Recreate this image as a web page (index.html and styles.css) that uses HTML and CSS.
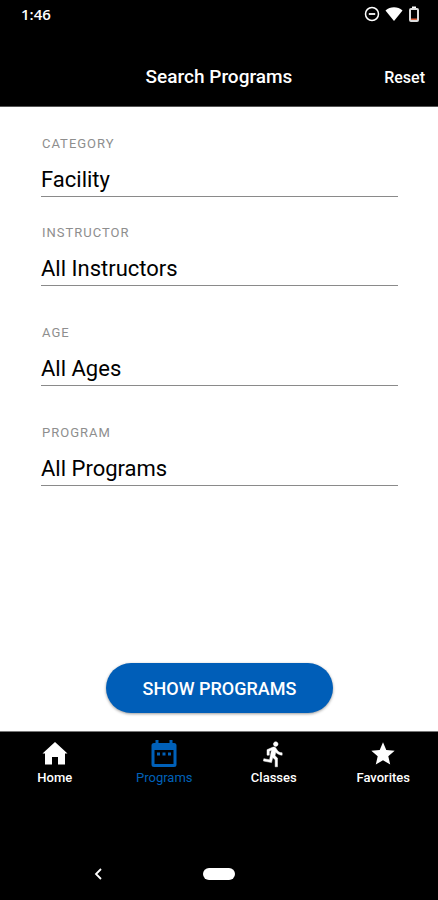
FILE: index.html
```html
<!DOCTYPE html>
<html lang="en">
<head>
    <meta charset="UTF-8">
    <meta name="viewport" content="width=device-width, initial-scale=1.0">
    <title>Search Programs</title>
    <link rel="stylesheet" href="styles.css">
</head>
<body>
<div class="status-bar">
    <span class="time">1:46</span>
    <div class="status-icons">
        <svg width="16" height="16" viewBox="0 0 16 16" fill="none" stroke="#fff">
            <circle cx="8" cy="8" r="6.5" stroke-width="1.5"/>
            <path d="M4.8 8h6.4" stroke-width="1.8"/>
        </svg>
        <svg width="18" height="16" viewBox="0 0 18 16" fill="#fff">
            <path d="M9 15L0.5 4.4C3 2.3 5.8 1.2 9 1.2s6 1.1 8.5 3.2z"/>
        </svg>
        <svg width="12" height="16" viewBox="0 0 12 16" fill="none">
            <path d="M4 0.500h4V3H4z" fill="#fff"/>
            <rect x="2" y="3" width="8" height="12" rx="1" stroke="#ddd" stroke-width="2"/>
            <path d="M3 12.500h6V14H3z" fill="#e0603c"/>
        </svg>
    </div>
</div>

<header class="header">
    <h1 class="title">Search Programs</h1>
    <button class="reset-btn" type="button">Reset</button>
</header>

<main class="content">
    <form class="search-form">
        <div class="field">
            <label for="category">CATEGORY</label>
            <select id="category"><option>Facility</option></select>
        </div>
        <div class="field field-wide">
            <label for="instructor">INSTRUCTOR</label>
            <select id="instructor"><option>All Instructors</option></select>
        </div>
        <div class="field field-wide">
            <label for="age">AGE</label>
            <select id="age"><option>All Ages</option></select>
        </div>
        <div class="field">
            <label for="program">PROGRAM</label>
            <select id="program"><option>All Programs</option></select>
        </div>
        <button class="show-btn" type="submit">SHOW PROGRAMS</button>
    </form>
</main>

<nav class="tab-bar">
    <a class="tab" href="#home">
        <svg width="28" height="28" viewBox="0 0 28 28" fill="currentColor">
            <path d="M14 2L1.500 13.500H4V24.500h7V17h6v7.500h7v-11h2.500z"/>
        </svg>
        <span>Home</span>
    </a>
    <a class="tab active" href="#programs">
        <svg width="28" height="28" viewBox="0 0 28 28" fill="currentColor">
            <path fill-rule="evenodd" d="M5.500 0h3v3h11V0h3v3H24a2.500 2.500 0 0 1 2.500 2.500v19A2.500 2.500 0 0 1 24 27H4a2.500 2.500 0 0 1-2.500-2.500v-19A2.500 2.500 0 0 1 4 3h1.500zM4.500 10v14h19V10z"/>
            <path d="M7 12.500h3v3H7zM12.500 12.500h3v3h-3zM18 12.500h3v3h-3z"/>
        </svg>
        <span>Programs</span>
    </a>
    <a class="tab" href="#classes">
        <svg width="28" height="28" viewBox="0 0 24 24" fill="currentColor" stroke="currentColor" stroke-width="0.4">
            <path d="M13.490 5.480c1.100 0 2-.9 2-2s-.9-2-2-2-2 .9-2 2 .9 2 2 2zm-3.600 13.900l1-4.400 2.100 2v6h2v-7.500l-2.100-2 .6-3c1.300 1.500 3.300 2.500 5.500 2.500v-2c-1.900 0-3.500-1-4.300-2.400l-1-1.600c-.4-.6-1-1-1.700-1-.3 0-.5.1-.8.1l-5.200 2.200v4.700h2v-3.400l1.800-.7-1.600 8.100-4.900-1-.4 2 7 1.400z"/>
        </svg>
        <span>Classes</span>
    </a>
    <a class="tab" href="#favorites">
        <svg width="28" height="28" viewBox="0 0 24 24" fill="currentColor">
            <path d="M12 17.270L18.180 21l-1.640-7.030L22 9.240l-7.190-.61L12 2 9.190 8.630 2 9.240l5.460 4.730L5.820 21z"/>
        </svg>
        <span>Favorites</span>
    </a>
</nav>

<div class="system-bar">
    <button class="back-btn" type="button" aria-label="Back">
        <svg width="8" height="12" viewBox="0 0 8 12" fill="none" stroke="#fff" stroke-width="1.8">
            <path d="M7 1L2 6l5 5"/>
        </svg>
    </button>
    <button class="home-btn" type="button" aria-label="Home screen"></button>
</div>
</body>
</html>
```

FILE: styles.css
```css
* {
    box-sizing: border-box;
}

body {
    margin: 0;
    min-height: 100vh;
    display: flex;
    flex-direction: column;
    background: #fff;
    color: #000;
    font-family: Roboto, "Liberation Sans", sans-serif;
}

button {
    border: none;
    padding: 0;
    background: none;
    color: #fff;
    font-family: inherit;
    cursor: pointer;
}

.status-bar {
    display: flex;
    align-items: center;
    justify-content: space-between;
    height: 28px;
    padding: 0 18px 0 21px;
    background: #000;
    color: #fff;
}

.time {
    font-family: "Open Sans", Roboto, sans-serif;
    font-size: 15px;
    font-weight: 600;
    line-height: 28px;
}

.status-icons {
    display: flex;
    gap: 5px;
}

.header {
    display: grid;
    grid-template-columns: 1fr auto 1fr;
    align-items: center;
    padding: 28px 13px 8px;
    background: #000;
    color: #fff;
    border-bottom: 1px solid #555;
}

.title {
    grid-column: 2;
    margin: 0;
    font-size: 19px;
    font-weight: 500;
    line-height: 42px;
}

.reset-btn {
    justify-self: end;
    font-size: 16px;
    font-weight: 500;
}

.content {
    flex: 1;
    display: flex;
    padding: 29px 40px 18px 41px;
}

.search-form {
    flex: 1;
    display: flex;
    flex-direction: column;
}

.field {
    display: flex;
    flex-direction: column;
    margin-bottom: 28px;
}

.field-wide {
    margin-bottom: 39px;
}

.field label {
    padding-left: 1px;
    color: #8e8e8e;
    font-size: 13px;
    line-height: 16px;
    letter-spacing: 1px;
}

.field select {
    appearance: none;
    width: 100%;
    height: 45px;
    padding: 10px 0 0;
    border: none;
    border-bottom: 1px solid #8a8a8a;
    border-radius: 0;
    background: transparent;
    color: #000;
    font-family: inherit;
    font-size: 22px;
}

.show-btn {
    align-self: center;
    width: 227px;
    height: 50px;
    margin-top: auto;
    border-radius: 25px;
    background: #005eb8;
    font-size: 18px;
    font-weight: 500;
    box-shadow: 0 1px 3px rgba(0, 0, 0, 0.4);
}

.tab-bar {
    display: grid;
    grid-template-columns: repeat(4, 1fr);
    padding: 8px 0 60px;
    border-top: 1px solid #777;
    background: #000;
}

.tab {
    display: flex;
    flex-direction: column;
    align-items: center;
    color: #fff;
    font-size: 13px;
    font-weight: 500;
    line-height: 20px;
    text-decoration: none;
}

.tab.active {
    color: #0060b8;
    font-weight: 400;
}

.system-bar {
    display: grid;
    grid-template-columns: 1fr auto 1fr;
    align-items: center;
    height: 52px;
    background: #000;
}

.back-btn {
    display: flex;
    justify-self: center;
    margin-right: 8px;
}

.home-btn {
    width: 32px;
    height: 12px;
    border-radius: 6px;
    background: #fff;
}
```
